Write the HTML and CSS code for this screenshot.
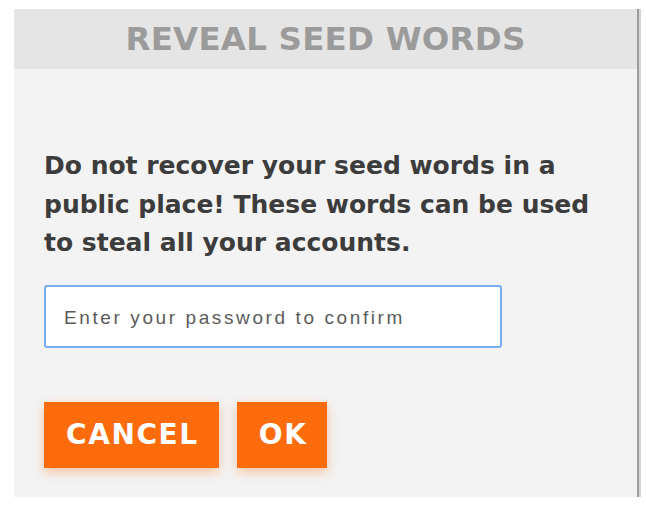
FILE: index.html
```html
<!DOCTYPE html>
<html lang="en">
<head>
<meta charset="UTF-8" /><meta name="viewport" content="width=device-width, initial-scale=1" />
<title>Reveal Seed Words</title>
<link rel="stylesheet" href="styles.css">
</head>
<body>
<section class="panel" aria-labelledby="reveal-heading">
  <header class="panel-head"><h1 id="reveal-heading">REVEAL SEED WORDS</h1></header>
  <div class="panel-body">
    <p class="warning">Do not recover your seed words in a public place! These words can be used to steal all your accounts.</p>
    <input type="password" class="pw-input" placeholder="Enter your password to confirm" aria-label="Password" />
    <div class="actions">
      <button type="button" class="btn">CANCEL</button>
      <button type="button" class="btn">OK</button>
    </div>
  </div>
</section>
</body>
</html>
```

FILE: styles.css
```css
:root{--panel:#f3f3f3;--head:#e5e5e5;--txt:#3c3c3c;--orange:#fd6c0c;--blue:#78aef0;}
*,*:before,*:after{box-sizing:border-box;}
body{margin:0;background:#fff;font-family:'DejaVu Sans',sans-serif;}
.panel{margin:9px 0 0 14px;width:625px;height:488px;background:var(--panel);border-right:2px solid #9d9d9d;box-shadow:2px 0 0 #d6d6d6;display:flex;flex-direction:column;}
.panel-head{height:60px;background:var(--head);display:flex;align-items:center;justify-content:center;}
.panel-head h1{margin:0;font-size:32.5px;font-weight:700;color:#9b9b9b;letter-spacing:.2px;}
.panel-body{padding:78px 0 0 30px;display:flex;flex-direction:column;}
.warning{margin:0;width:560px;font-size:25px;line-height:38.5px;font-weight:600;color:var(--txt);}
.pw-input{margin-top:22px;width:458px;height:63px;border:2px solid var(--blue);border-radius:3px;background:#fff;padding:4px 18px 0;font-family:'Liberation Sans',sans-serif;font-size:19px;letter-spacing:2.6px;color:#555;outline:none;}
.pw-input::placeholder{color:#5b5b5b;}
.actions{margin-top:54px;display:flex;gap:18px;}
.btn{height:66px;padding:0 20px 0 22px;border:none;background:var(--orange);color:#fff;font-family:'DejaVu Sans',sans-serif;font-weight:700;font-size:28px;letter-spacing:1.6px;box-shadow:0 4px 10px rgba(253,108,12,.35);cursor:pointer;}
```
